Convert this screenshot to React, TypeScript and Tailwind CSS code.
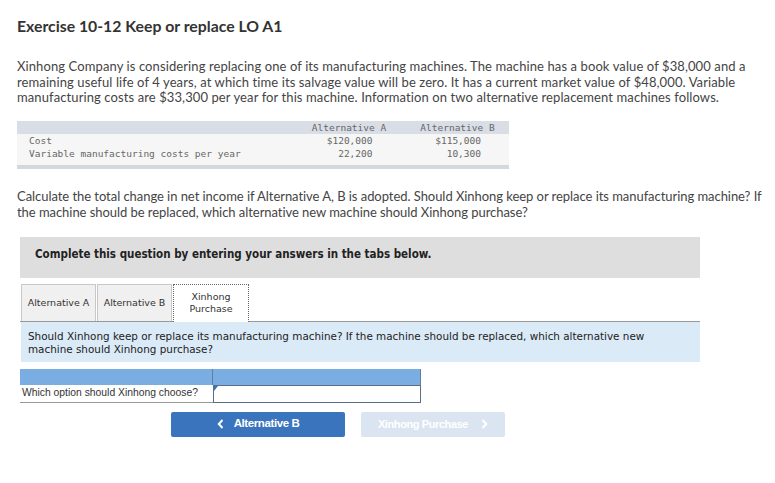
import React from "react";

const body = { fontFamily: "Lato, 'Open Sans', sans-serif" };
const mono = { fontFamily: "'DejaVu Sans Mono', 'Liberation Mono', monospace" };
const verdana = { fontFamily: "'DejaVu Sans', Verdana, sans-serif" };
const cond = { fontFamily: "'DejaVu Sans Condensed', 'DejaVu Sans', sans-serif" };
const arial = { fontFamily: "'Liberation Sans', Arial, sans-serif" };

function ChevLeft() {
  return (
    <svg width="7" height="10" viewBox="0 0 7 10" className="mr-[10px]">
      <path d="M5.5 1 L1.8 5 L5.5 9" fill="none" stroke="currentColor" strokeWidth="2" />
    </svg>
  );
}
function ChevRight() {
  return (
    <svg width="7" height="10" viewBox="0 0 7 10" className="ml-[13px]">
      <path d="M1.5 1 L5.2 5 L1.5 9" fill="none" stroke="currentColor" strokeWidth="2" />
    </svg>
  );
}

export default function App() {
  return (
    <div className="w-[775px] h-[483px] bg-white text-[#333] overflow-hidden" style={body}>
      <div className="pl-[17px] pt-[16px]">
        <h1 className="text-[15.8px] leading-[20px] font-bold text-[#333]">Exercise 10-12 Keep or replace LO A1</h1>
        <p className="mt-[23px] text-[13px] leading-[15.5px] text-[#444] tracking-[0.1px]">
          Xinhong Company is considering replacing one of its manufacturing machines. The machine has a book value of $38,000 and a<br />
          remaining useful life of 4 years, at which time its salvage value will be zero. It has a current market value of $48,000. Variable<br />
          manufacturing costs are $33,300 per year for this machine. Information on two alternative replacement machines follows.
        </p>

        <div className="mt-[15px] w-[492px] text-[9.5px] text-[#666]" style={mono}>
          <div className="h-[13px] bg-[#d9dde6] grid grid-cols-[275px_114px_103px] items-center">
            <div />
            <div className="text-center">Alternative A</div>
            <div className="text-center">Alternative B</div>
          </div>
          <div className="bg-[#f6f6f6] pb-[5px]">
            <div className="h-[13px] grid grid-cols-[275px_114px_103px] items-center">
              <div className="pl-[12px]">Cost</div>
              <div className="flex justify-center"><div className="w-[47px] text-right">$120,000</div></div>
              <div className="flex justify-center"><div className="w-[47px] text-right">$115,000</div></div>
            </div>
            <div className="h-[13px] grid grid-cols-[275px_114px_103px] items-center">
              <div className="pl-[12px]">Variable manufacturing costs per year</div>
              <div className="flex justify-center"><div className="w-[47px] text-right">22,200</div></div>
              <div className="flex justify-center"><div className="w-[47px] text-right">10,300</div></div>
            </div>
          </div>
          <div className="h-[4px] bg-[#d3d7de]" />
        </div>

        <p className="mt-[19px] text-[13px] leading-[16px] text-[#444] tracking-[-0.05px]">
          Calculate the total change in net income if Alternative A, B is adopted. Should Xinhong keep or replace its manufacturing machine? If<br />
          the machine should be replaced, which alternative new machine should Xinhong purchase?
        </p>
      </div>

      <div className="pl-[20px]">
        <div className="mt-[17px] w-[680px] h-[41px] bg-[#dedede] pl-[15px] pt-[10px]">
          <div className="text-[11.5px] leading-[14px] font-bold text-[#222] font-stretch-condensed" style={cond}>
            Complete this question by entering your answers in the tabs below.
          </div>
        </div>

        <div className="mt-[6px] w-[680px] flex items-end border-b border-[#999] pl-[1px]">
          <div className="w-[75px] h-[37px] pt-[2px] bg-[#f0f0f0] border border-b-0 border-[#c8c8c8] flex items-center justify-center text-[9.5px] text-[#333]" style={verdana}>
            Alternative A
          </div>
          <div className="ml-[1px] w-[75px] h-[37px] pt-[2px] bg-[#f0f0f0] border border-b-0 border-[#c8c8c8] flex items-center justify-center text-[9.5px] text-[#333]" style={verdana}>
            Alternative B
          </div>
          <div className="ml-[1px] w-[76px] h-[38px] -mb-px bg-white border border-b-0 border-dotted border-[#666] flex items-center justify-center text-center text-[9.5px] leading-[12px] text-[#333]" style={verdana}>
            Xinhong<br />Purchase
          </div>
        </div>

        <div className="ml-[1px] w-[679px] h-[40px] bg-[#daeaf7] pl-[7px] pt-[8px] text-[10.4px] leading-[13px] text-[#222]" style={verdana}>
          Should Xinhong keep or replace its manufacturing machine? If the machine should be replaced, which alternative new<br />
          machine should Xinhong purchase?
        </div>

        <div className="mt-[7px] w-[401px] text-[10.35px] text-[#333]" style={arial}>
          <div className="flex h-[16px] bg-[#7aaee3]">
            <div className="w-[193px] border-r border-[#5f7fa3]" />
            <div className="flex-1 border-r border-[#5f7fa3]" />
          </div>
          <div className="flex h-[18px]">
            <div className="w-[193px] border-b border-[#999] flex items-center pl-[2px]">Which option should Xinhong choose?</div>
            <div className="relative flex-1 border border-[#5a6e8a] bg-white">
              <div className="absolute left-0 top-0 w-0 h-0 border-t-[5px] border-t-[#3b74bc] border-r-[4px] border-r-transparent" />
            </div>
          </div>
        </div>

        <div className="mt-[9px] ml-[151px] flex gap-[16px]" style={arial}>
          <div className="w-[174px] h-[25px] bg-[#3a74bd] rounded-[2px] flex items-center justify-center text-white text-[11.5px] font-bold tracking-[-0.4px]">
            <ChevLeft />Alternative B
          </div>
          <div className="w-[144px] h-[25px] bg-[#dbe5f1] rounded-[2px] flex items-center justify-center text-white text-[11px] font-bold tracking-[-0.4px]">
            Xinhong Purchase<ChevRight />
          </div>
        </div>
      </div>
    </div>
  );
}
